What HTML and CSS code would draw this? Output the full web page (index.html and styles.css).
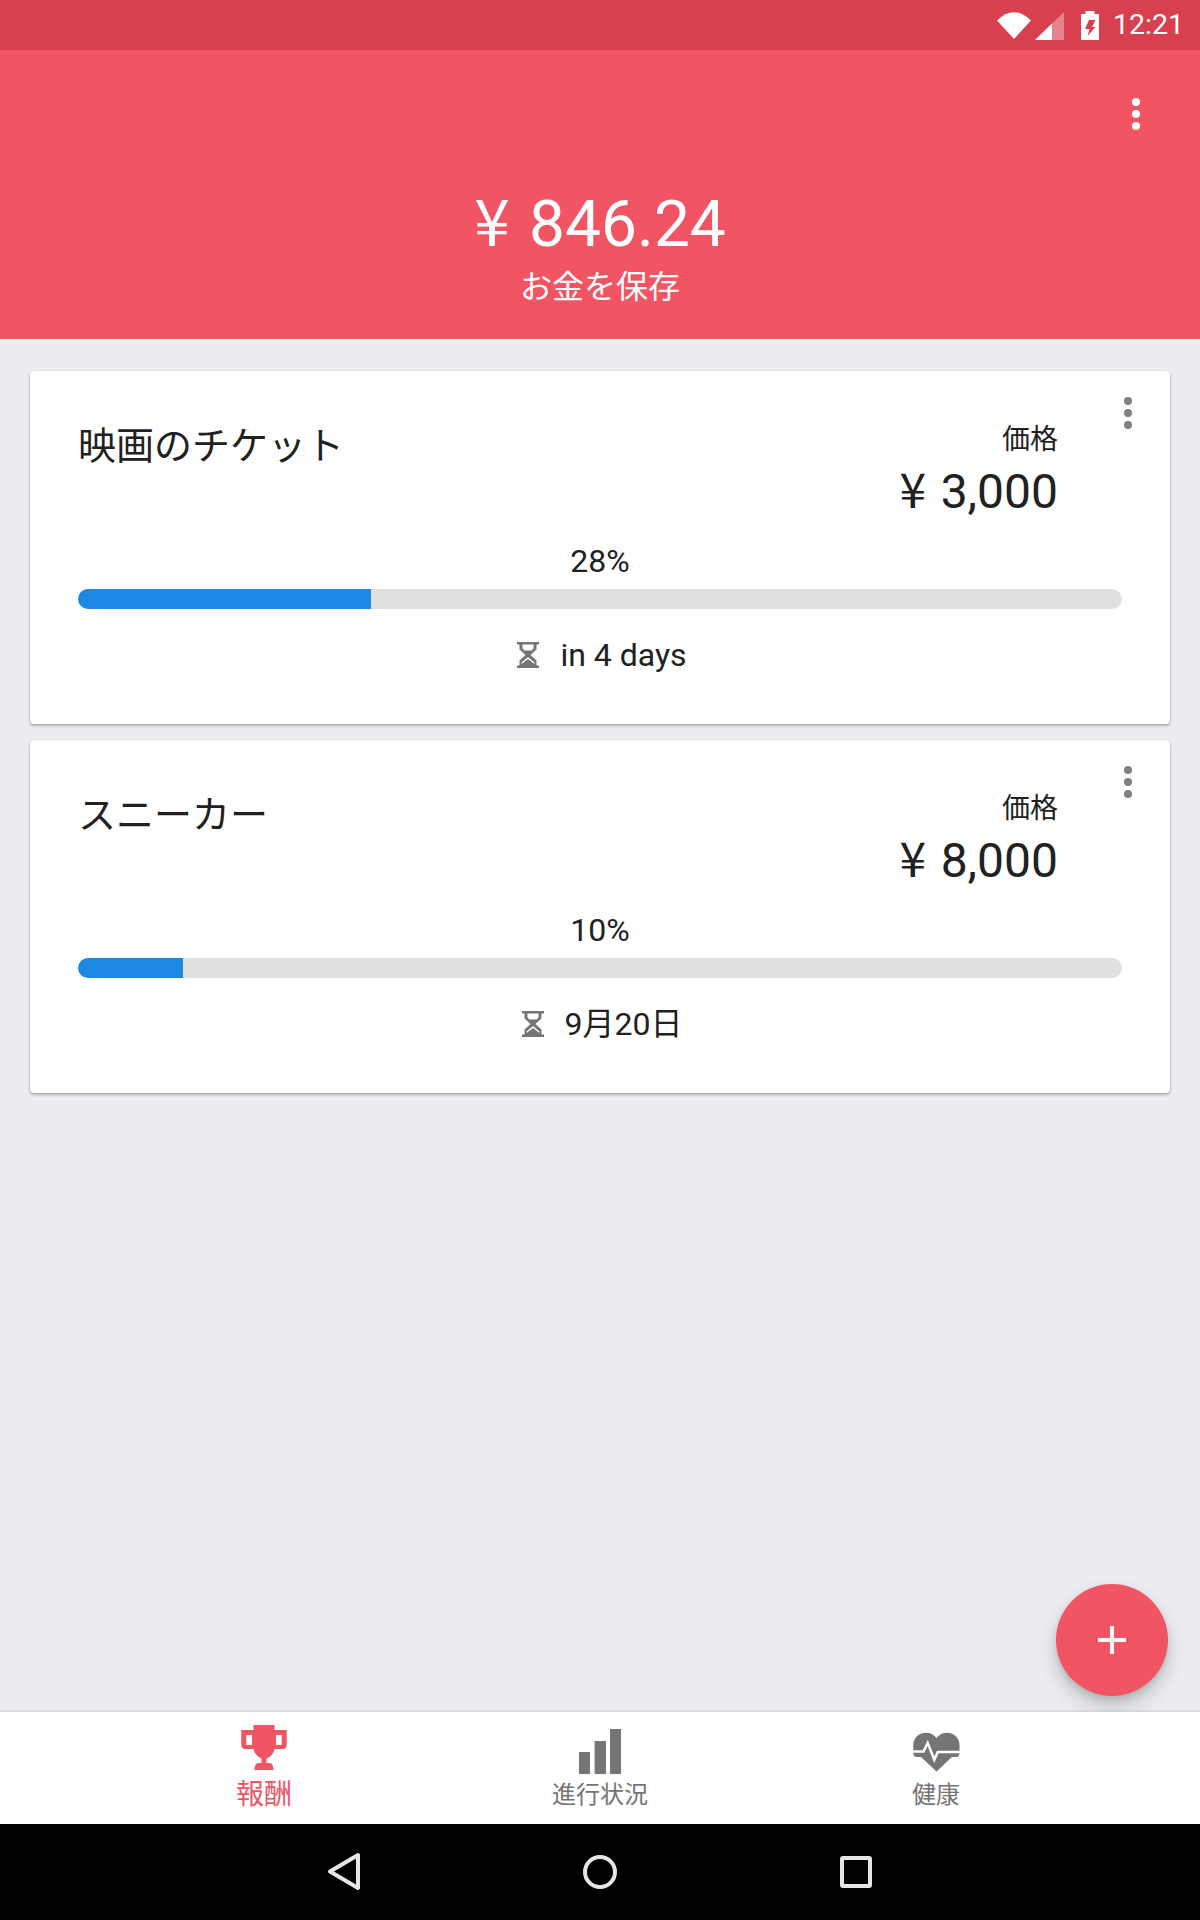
FILE: index.html
```html
<!DOCTYPE html>
<html lang="ja">
<head>
<meta charset="utf-8">
<title>報酬</title>
<link rel="stylesheet" href="styles.css">
</head>
<body>
<div class="phone">
  <div class="status-bar">
    <svg class="st-wifi" width="36" height="30" viewBox="0 0 36 30"><path d="M1 10.5Q18-6 35 10.5L18 29Z" fill="#fff"/></svg>
    <svg class="st-signal" width="29" height="28" viewBox="0 0 29 28"><path d="M0 28L29 28V0Z" fill="#fff" opacity=".35"/><path d="M0 28H17V11.5Z" fill="#fff"/></svg>
    <svg class="st-battery" width="18" height="29" viewBox="0 0 18 29"><path fill-rule="evenodd" d="M4.5 0H13.5V3H18V29H0V3H4.5ZM8 9H14.5L11 16H14.5L6.5 25L8.5 18H4Z" fill="#fff"/></svg>
    <span class="st-time">12:21</span>
  </div>

  <header class="hero">
    <svg class="kebab kebab-hero" width="8" height="32" viewBox="0 0 8 32"><circle cx="4" cy="4" r="4"/><circle cx="4" cy="16" r="4"/><circle cx="4" cy="28" r="4"/></svg>
    <div class="hero-amount"><span class="yen">¥</span> 846.24</div>
    <div class="hero-label">お金を保存</div>
  </header>

  <main class="content">
    <article class="card">
      <svg class="kebab kebab-card" width="8" height="32" viewBox="0 0 8 32"><circle cx="4" cy="4" r="4"/><circle cx="4" cy="16" r="4"/><circle cx="4" cy="28" r="4"/></svg>
      <div class="card-top">
        <h2 class="card-title">映画のチケット</h2>
        <div class="price">
          <div class="price-label">価格</div>
          <div class="price-value"><span class="yen">¥</span> 3,000</div>
        </div>
      </div>
      <div class="percent">28%</div>
      <div class="track"><div class="fill" style="width:28.1%"></div></div>
      <div class="due">
        <svg class="hourglass" width="22" height="26" viewBox="0 0 22 26"><path fill-rule="evenodd" d="M0 0H22V2.5H19.5V7.5L13.5 13L19.5 18.5V23.5H22V26H0V23.5H2.5V18.5L8.5 13L2.5 7.5V2.5H0ZM5.5 2.5V6.5L7.5 8.5H14.5L16.5 6.5V2.5ZM11 15L4.5 20.5V22L11 17L17.5 22V20.5Z"/></svg>
        <span>in 4 days</span>
      </div>
    </article>

    <article class="card">
      <svg class="kebab kebab-card" width="8" height="32" viewBox="0 0 8 32"><circle cx="4" cy="4" r="4"/><circle cx="4" cy="16" r="4"/><circle cx="4" cy="28" r="4"/></svg>
      <div class="card-top">
        <h2 class="card-title">スニーカー</h2>
        <div class="price">
          <div class="price-label">価格</div>
          <div class="price-value"><span class="yen">¥</span> 8,000</div>
        </div>
      </div>
      <div class="percent">10%</div>
      <div class="track"><div class="fill" style="width:10.1%"></div></div>
      <div class="due">
        <svg class="hourglass" width="22" height="26" viewBox="0 0 22 26"><path fill-rule="evenodd" d="M0 0H22V2.5H19.5V7.5L13.5 13L19.5 18.5V23.5H22V26H0V23.5H2.5V18.5L8.5 13L2.5 7.5V2.5H0ZM5.5 2.5V6.5L7.5 8.5H14.5L16.5 6.5V2.5ZM11 15L4.5 20.5V22L11 17L17.5 22V20.5Z"/></svg>
        <span>9月20日</span>
      </div>
    </article>
  </main>

  <button class="fab" type="button" aria-label="追加">
    <svg width="28" height="28" viewBox="0 0 28 28"><path d="M12 0H16V12H28V16H16V28H12V16H0V12H12Z" fill="#fff"/></svg>
  </button>

  <nav class="tabs">
    <div class="tab tab-active">
      <svg width="60" height="56" viewBox="0 0 60 56"><path fill-rule="evenodd" d="M19.5 5H40.5V10H52.7V25Q52.7 29 48.7 29H40.5C40 33 36.5 37 32.5 38.5V43H36Q39.5 44 39.5 50H20.5Q20.5 44 24 43H27.5V38.5C23.5 37 20 33 19.5 29H11.3Q7.3 29 7.3 25V10H19.5ZM12.3 15V25H18V15ZM42 15V25H47.7V15Z"/></svg>
      <span class="tab-label">報酬</span>
    </div>
    <div class="tab">
      <svg width="60" height="56" viewBox="0 0 60 56"><path d="M9 32H20V54H9ZM24.6 21H36V54H24.6ZM40 9H51V54H40Z"/></svg>
      <span class="tab-label">進行状況</span>
    </div>
    <div class="tab">
      <svg width="60" height="56" viewBox="0 0 60 56"><path d="M30.5 18C33 14.5 37 12.7 41 12.7C48 12.7 53.5 18 53.5 25V33Q53.5 37 50 37H46L30.5 51.5L15 37H11Q7.3 37 7.3 33V25C7.3 18 13 12.7 20 12.7C24 12.7 28 14.5 30.5 18Z"/><path class="pulse" d="M5 31.5H17.5L21.7 23L28.3 39.7L31.7 32H56"/></svg>
      <span class="tab-label">健康</span>
    </div>
  </nav>

  <div class="system-nav">
    <svg width="48" height="48" viewBox="0 0 48 48"><path d="M38 7V40L10 23.5Z"/></svg>
    <svg width="48" height="48" viewBox="0 0 48 48"><circle cx="24" cy="24" r="15"/></svg>
    <svg width="48" height="48" viewBox="0 0 48 48"><rect x="10" y="10" width="28" height="28" rx="1"/></svg>
  </div>
</div>
</body>
</html>
```

FILE: styles.css
```css
* { box-sizing: border-box; }

html, body {
  margin: 0;
  padding: 0;
}

body {
  font-family: Roboto, "Noto Sans CJK JP", sans-serif;
  color: #212121;
  background: #ebedf1;
}

.phone {
  position: relative;
  display: flex;
  flex-direction: column;
  width: 1200px;
  height: 1920px;
  overflow: hidden;
  background: #ebedf1;
}

/* status bar */
.status-bar {
  flex: none;
  display: flex;
  align-items: center;
  justify-content: flex-end;
  height: 50px;
  padding-right: 16px;
  background: #d84050;
  color: #fff;
}

.st-wifi { margin-right: 3px; }
.st-signal { margin-right: 17px; margin-top: 1px; }
.st-battery { margin-right: 14px; }
.st-time { font-size: 28.5px; line-height: 50px; }

/* hero */
.hero {
  position: relative;
  flex: none;
  height: 289px;
  padding-top: 136px;
  background: #f15463;
  color: #fff;
  text-align: center;
}

.hero-amount { font-size: 64px; line-height: 76px; word-spacing: 3.5px; }
.hero-label { font-size: 32px; line-height: 48px; }

.yen { font-family: "Noto Sans CJK JP", sans-serif; line-height: 1; }

.kebab { position: absolute; }
.kebab-hero { top: 48px; right: 60px; fill: #fff; }
.kebab-card { top: 26px; right: 38px; fill: #808080; }

/* cards */
.content {
  flex: 1;
  display: flex;
  flex-direction: column;
  gap: 16px;
  padding: 32px 30px 0;
}

.card {
  position: relative;
  height: 353px;
  padding: 47px 48px 0;
  border-radius: 4px;
  background: #fff;
  box-shadow: 0 2px 3px rgba(0, 0, 0, .26), 0 0 2px rgba(0, 0, 0, .14);
}

.card-top {
  display: flex;
  justify-content: space-between;
  align-items: flex-start;
  padding-right: 64px;
}

.card-title {
  margin: 3px 0 0;
  font-size: 38px;
  font-weight: 400;
  line-height: 50px;
}

.price { text-align: right; }
.price-label { font-size: 28px; line-height: 44px; }
.price-value { font-size: 48px; line-height: 60px; word-spacing: 2.5px; }

.percent {
  margin-top: 19px;
  font-size: 32px;
  line-height: 40px;
  text-align: center;
}

.track {
  height: 20px;
  margin-top: 8px;
  border-radius: 10px;
  background: #e0e0e0;
}

.fill {
  height: 100%;
  border-radius: 10px 0 0 10px;
  background: #1e88e5;
}

.due {
  display: flex;
  justify-content: center;
  align-items: center;
  gap: 21px;
  margin-top: 26px;
  padding-left: 4px;
  font-size: 32px;
  line-height: 40px;
}

.hourglass { fill: #757575; }

/* floating action */
.fab {
  position: absolute;
  left: 1056px;
  top: 1584px;
  display: flex;
  align-items: center;
  justify-content: center;
  width: 112px;
  height: 112px;
  padding: 0;
  border: 0;
  border-radius: 50%;
  background: #f15463;
  box-shadow: 0 10px 20px rgba(0, 0, 0, .19), 0 4px 6px rgba(0, 0, 0, .1);
}

/* bottom tabs */
.tabs {
  position: relative;
  flex: none;
  display: grid;
  grid-template-columns: repeat(3, 1fr);
  height: 112px;
  padding: 8px 96px 0;
  background: #fff;
  box-shadow: 0 -1px 3px rgba(0, 0, 0, .12);
  color: #757575;
}

.tab {
  display: flex;
  flex-direction: column;
  align-items: center;
  fill: #757575;
}

.tab svg { display: block; }
.tab-label { font-size: 24px; line-height: 38px; }
.pulse { fill: none; stroke: #fff; stroke-width: 2.5; }

.tab-active { color: #f15463; fill: #f15463; }
.tab-active .tab-label { font-size: 28px; }

/* system nav */
.system-nav {
  flex: none;
  display: grid;
  grid-template-columns: repeat(3, 256px);
  justify-content: center;
  justify-items: center;
  align-items: center;
  height: 96px;
  background: #000;
}

.system-nav svg {
  fill: none;
  stroke: #e6e6e6;
  stroke-width: 4;
  stroke-linejoin: round;
}
```
